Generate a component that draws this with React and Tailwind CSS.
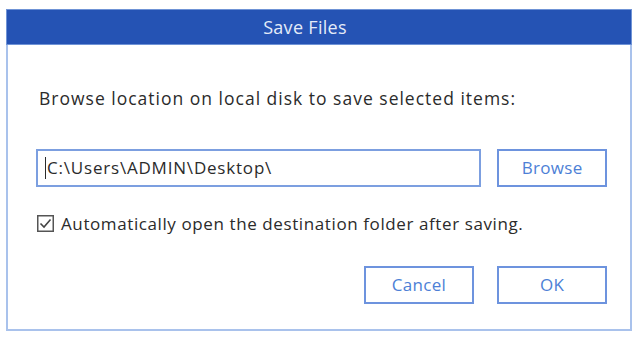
export default function App() {
  const font = { fontFamily: '"Open Sans", "Noto Sans", sans-serif' };
  return (
    <div className="w-[640px] h-[340px] bg-white pt-[9px] pl-[6px]" style={font}>
      <div className="w-[626px] h-[322px] flex flex-col">
        <div className="h-[36px] bg-[#2553b4] flex items-center justify-center pr-[28px] text-[#e4ebf8] text-[18px] tracking-[0.3px] border border-[#6f93d6]">
          Save Files
        </div>
        <div className="flex-1 border-x-2 border-b-2 border-[#a9c2ec] pl-[28px] pr-[23px] flex flex-col">
          <div className="mt-[43px] pl-[3px] h-[20px] leading-[20px] text-[17.5px] tracking-[1px] text-[#2b2b2b] whitespace-nowrap">
            Browse location on local disk to save selected items:
          </div>
          <div className="mt-[41px] flex gap-[16px]">
            <div className="w-[446px] h-[38px] border-2 border-[#7c9fe0] flex items-center pl-[7px] text-[17px] tracking-[0.8px] text-[#2b2b2b] whitespace-nowrap">
              <span className="w-px h-[22px] bg-[#2b2b2b] mr-px"></span>
              C:\Users\ADMIN\Desktop\
            </div>
            <div className="w-[110px] h-[38px] border-2 border-[#6d93de] flex items-center justify-center text-[17px] tracking-[0.3px] text-[#4d7fd6]">
              Browse
            </div>
          </div>
          <div className="mt-[28px] h-[17px] flex items-center gap-[7px] text-[17px] tracking-[0.6px] text-[#2b2b2b] whitespace-nowrap">
            <svg width="17" height="17" viewBox="0 0 17 17" className="shrink-0 ml-px">
              <rect x="0.75" y="0.75" width="15.5" height="15.5" fill="white" stroke="#555" strokeWidth="1.5" />
              <path d="M3.5 8.5 L7 12 L13.5 4.5" fill="none" stroke="#444" strokeWidth="1.6" />
            </svg>
            <span>Automatically open the destination folder after saving.</span>
          </div>
          <div className="mt-[34px] flex justify-end gap-[23px]">
            <div className="w-[110px] h-[38px] border-2 border-[#6d93de] flex items-center justify-center text-[17px] tracking-[0.3px] text-[#4d7fd6]">
              Cancel
            </div>
            <div className="w-[110px] h-[38px] border-2 border-[#6d93de] flex items-center justify-center text-[17px] tracking-[0.3px] text-[#4d7fd6]">
              OK
            </div>
          </div>
        </div>
      </div>
    </div>
  );
}
